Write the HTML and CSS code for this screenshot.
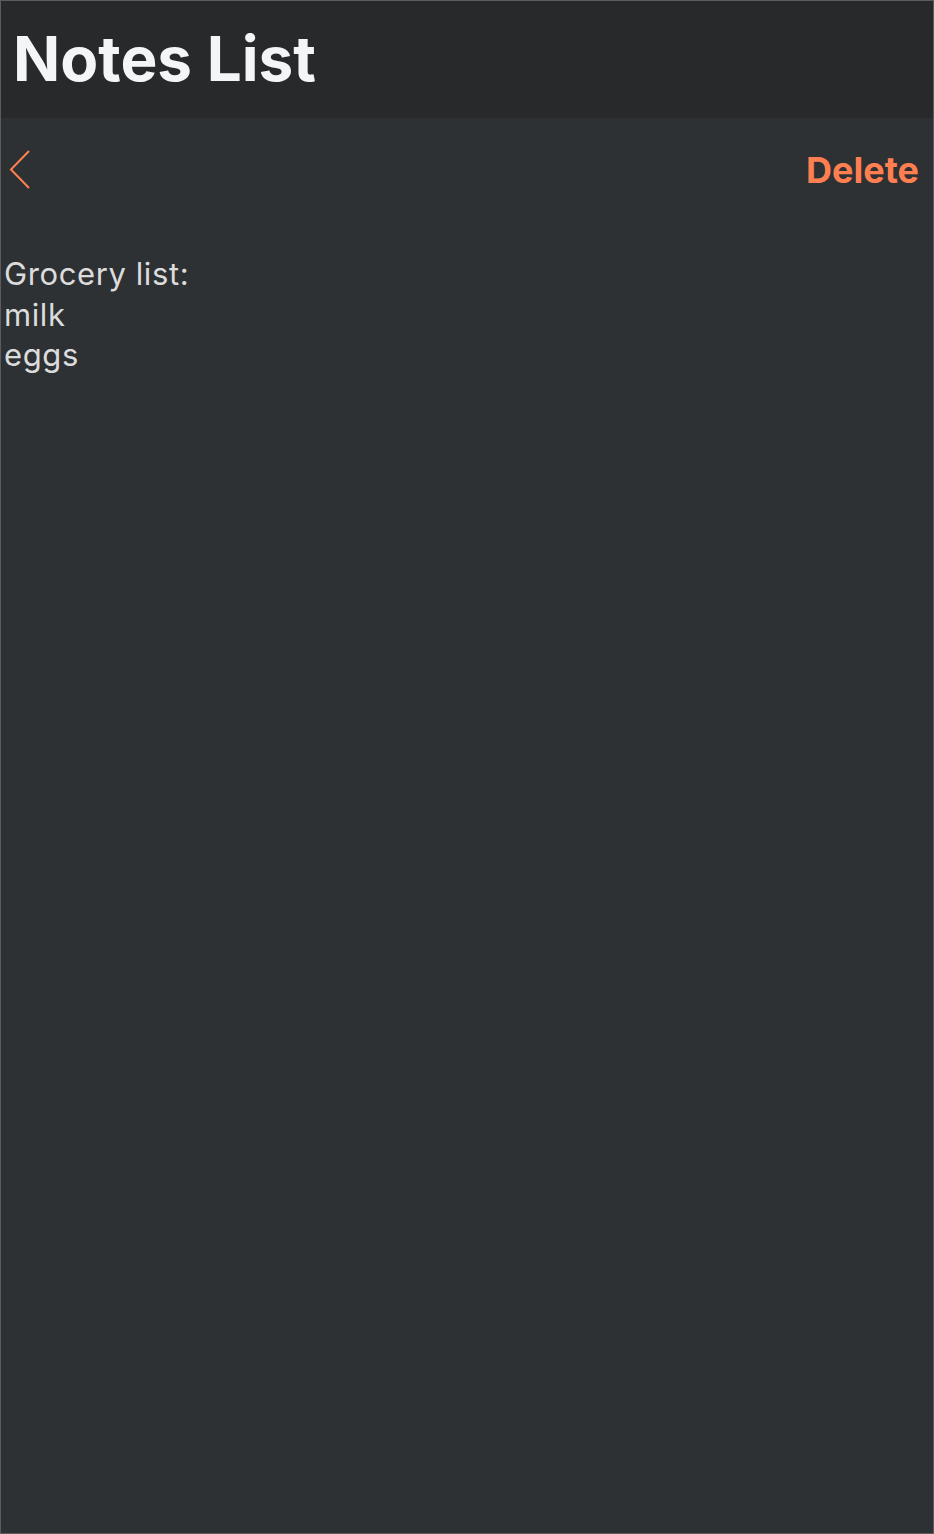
FILE: index.html
```html
<!DOCTYPE html>
<html>
<head>
<meta charset="utf-8">
<link rel="stylesheet" href="styles.css">
</head>
<body>
<div class="app">
  <header class="topbar">
    <h1 class="title">Notes List</h1>
  </header>
  <main class="content">
    <div class="toolbar">
      <button class="back" aria-label="Back">
        <svg width="22" height="40" viewBox="0 0 22 40"><path d="M20 1 L2 19.5 L20 38" fill="none" stroke="#ff7f50" stroke-width="2"/></svg>
      </button>
      <button class="delete">Delete</button>
    </div>
    <div class="note">Grocery list:<br>milk<br>eggs</div>
  </main>
</div>
</body>
</html>
```
FILE: styles.css
```css
html, body {
  margin: 0;
  padding: 0;
  height: 100%;
}
body {
  background: #2e3134;
  font-family: "Inter", "Noto Sans", sans-serif;
}
.app {
  box-sizing: border-box;
  height: 1534px;
  border: 1px solid #5c5c5c;
  background: #2e3134;
  display: flex;
  flex-direction: column;
}
.topbar {
  background: #28292b;
  height: 117px;
  display: flex;
  align-items: center;
  padding-left: 12px;
  flex: none;
}
.title {
  margin: 0;
  color: #f4f5f7;
  font-size: 62px;
  font-weight: 700;
  line-height: 1;
  padding-bottom: 2px;
}
.content {
  flex: 1;
}
.toolbar {
  display: flex;
  justify-content: space-between;
  align-items: center;
  height: 104px;
  padding: 0 14px 0 8px;
}
.back {
  background: none;
  border: 0;
  padding: 0;
  display: flex;
  cursor: pointer;
}
.delete {
  background: none;
  border: 0;
  padding: 0;
  color: #ff7f50;
  font-family: inherit;
  font-size: 36px;
  font-weight: 700;
  cursor: text;
  margin-top: 0;
}
.note {
  color: #dcdcdc;
  font-size: 31px;
  letter-spacing: 0.6px;
  line-height: 40.5px;
  padding: 32px 0 0 3px;
}
```
